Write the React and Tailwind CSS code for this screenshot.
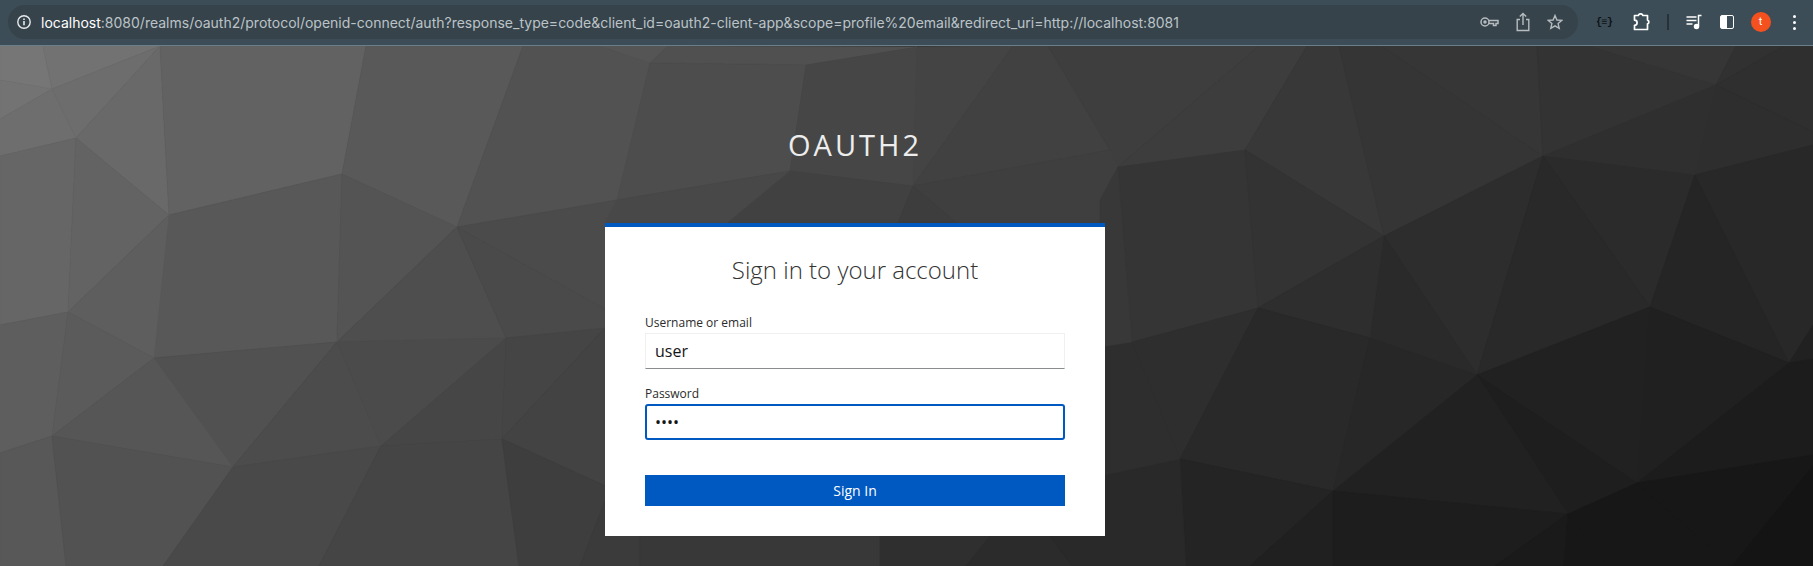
const POLYGONS = [
  ['0,46 43,46 52,89 0,80', '#7b7b7b'],
  ['43,46 160,46 52,89', '#747474'],
  ['0,80 52,89 0,119', '#757575'],
  ['0,119 52,89 76,138 0,156', '#6e6e6e'],
  ['52,89 160,46 76,138', '#6c6c6c'],
  ['160,46 169,215 76,138', '#686868'],
  ['0,156 76,138 68,312 0,325', '#666666'],
  ['76,138 169,215 68,312', '#616161'],
  ['160,46 366,46 342,174 169,215', '#626262'],
  ['366,46 523,46 457,227 342,174', '#5b5b5b'],
  ['523,46 600,46 650,63 617,200 457,227', '#525252'],
  ['169,215 342,174 337,342 154,358', '#585858'],
  ['169,215 154,358 68,312', '#5e5e5e'],
  ['342,174 457,227 337,342', '#565656'],
  ['457,227 506,338 337,342', '#505050'],
  ['457,227 640,328 506,338', '#4a4a4a'],
  ['457,227 617,200 640,200 640,328', '#4c4c4c'],
  ['0,325 68,312 52,436 0,453', '#606060'],
  ['68,312 154,358 52,436', '#5c5c5c'],
  ['154,358 337,342 233,467', '#505050'],
  ['52,436 154,358 233,467', '#555555'],
  ['337,342 381,446 233,467', '#4b4b4b'],
  ['337,342 506,338 381,446', '#4b4b4b'],
  ['506,338 502,439 381,446', '#454545'],
  ['506,338 605,328 502,439', '#434343'],
  ['605,328 640,328 640,490 610,488 502,439', '#434343'],
  ['0,453 52,436 66,566 0,566', '#585858'],
  ['52,436 233,467 163,566 66,566', '#505050'],
  ['233,467 381,446 319,566 163,566', '#474747'],
  ['381,446 502,439 519,566 319,566', '#444444'],
  ['502,439 610,488 580,566 519,566', '#3d3d3d'],
  ['610,488 640,490 640,566 580,566', '#383838'],
  ['600,46 668,46 650,63', '#585858'],
  ['668,46 917,47 806,65 650,63', '#535353'],
  ['650,63 806,65 790,171 617,200', '#4d4d4d'],
  ['806,65 917,47 913,186 790,171', '#474747'],
  ['917,47 1013,46 913,186', '#454545'],
  ['1013,46 1048,46 1110,150 913,186', '#424242'],
  ['1048,46 1259,46 1118,167 1110,150', '#3e3e3e'],
  ['790,171 913,186 898,223 727,223', '#3f3f3f'],
  ['617,200 790,171 727,223 605,223', '#454545'],
  ['913,186 1110,150 1118,167 1118,223 957,223', '#404040'],
  ['913,186 957,223 898,223', '#3a3a3a'],
  ['1118,167 1259,46 1307,46 1245,150', '#3f3f3f'],
  ['1307,46 1339,46 1384,236 1245,150', '#393939'],
  ['1339,46 1382,46 1543,156 1384,236', '#353535'],
  ['1382,46 1537,46 1543,156', '#383838'],
  ['1537,46 1589,46 1716,85 1543,156', '#333333'],
  ['1589,46 1736,46 1716,85', '#3a3a3a'],
  ['1736,46 1784,46 1716,85', '#323232'],
  ['1784,46 1813,46 1813,132 1716,85', '#2d2d2d'],
  ['1716,85 1813,132 1813,145 1695,175', '#2d2d2d'],
  ['1543,156 1716,85 1695,175', '#2f2f2f'],
  ['1118,167 1245,150 1258,308 1132,342', '#353535'],
  ['1245,150 1384,236 1258,308', '#333333'],
  ['1384,236 1543,156 1477,375', '#2d2d2d'],
  ['1384,236 1477,375 1370,338', '#2a2a2a'],
  ['1258,308 1384,236 1370,338', '#2e2e2e'],
  ['1543,156 1695,175 1650,307', '#2b2b2b'],
  ['1543,156 1650,307 1477,375', '#292929'],
  ['1695,175 1813,145 1813,325 1789,363', '#282828'],
  ['1695,175 1789,363 1650,307', '#252525'],
  ['1132,342 1258,308 1180,459', '#2e2e2e'],
  ['1258,308 1370,338 1333,491 1180,459', '#292929'],
  ['1370,338 1477,375 1333,491', '#272727'],
  ['1477,375 1650,307 1637,483', '#222222'],
  ['1650,307 1789,363 1637,483', '#202020'],
  ['1477,375 1637,483 1568,514', '#1f1f1f'],
  ['1477,375 1568,514 1333,491', '#212121'],
  ['1789,363 1813,325 1813,359', '#222222'],
  ['1789,363 1813,359 1813,455 1637,483', '#1c1c1c'],
  ['1333,491 1568,514 1495,566 1333,566', '#1b1b1b'],
  ['1180,459 1333,491 1250,566 1186,566', '#232323'],
  ['1333,491 1333,566 1250,566', '#1e1e1e'],
  ['1568,514 1495,566 1564,566', '#191919'],
  ['1568,514 1564,566 1607,566', '#141414'],
  ['1568,514 1637,483 1732,566 1607,566', '#161616'],
  ['1637,483 1813,455 1813,466 1732,566', '#161616'],
  ['1813,466 1813,566 1732,566', '#111111'],
  ['640,536 880,536 880,566 640,566', '#383838'],
  ['880,536 990,536 966,566 880,566', '#303030'],
  ['990,536 1050,536 1072,566 966,566', '#2a2a2a'],
  ['1050,536 1100,476 1180,459 1186,566 1072,566', '#282828'],
  ['1100,347 1132,342 1180,459 1100,476', '#2e2e2e'],
  ['1100,200 1118,167 1132,342 1100,347', '#393939'],
];

// soften the seams: each facet is pulled toward the average of its neighbours
const facets = POLYGONS.map(([points, fill]) => {
  const pts = points.split(' ').map((p) => p.split(',').map(Number));
  return {
    points,
    lum: parseInt(fill.slice(1, 3), 16),
    x: pts.reduce((s, p) => s + p[0], 0) / pts.length,
    y: pts.reduce((s, p) => s + p[1], 0) / pts.length,
  };
});

function softFill(f) {
  let sum = 0;
  let total = 0;
  facets.forEach((o) => {
    const d2 = (o.x - f.x) ** 2 + (o.y - f.y) ** 2;
    const w = Math.exp(-d2 / 16000);
    sum += w * o.lum;
    total += w;
  });
  const v = Math.round(f.lum * 0.45 + (sum / total) * 0.55);
  return `rgb(${v},${v},${v})`;
}

function PolyBackground() {
  return (
    <svg className="absolute left-0 top-[-46px] h-[566px] w-[1813px]" viewBox="0 0 1813 566">
      <rect width="1813" height="566" fill="#333333" />
      {facets.map((f) => {
        const fill = softFill(f);
        return <polygon key={f.points} points={f.points} fill={fill} stroke={fill} strokeWidth="0.6" />;
      })}
    </svg>
  );
}

function Toolbar() {
  return (
    <div className="flex h-[46px] items-center border-b border-[#6c7e8a] bg-[#3c4d57] pb-[1px]">
      <div className="ml-[8px] flex h-[34px] w-[1570px] items-center rounded-full bg-[#36434b]">
        <svg className="ml-[8px] h-[16px] w-[16px]" viewBox="0 0 16 16" fill="none" stroke="#e8eaed">
          <circle cx="8" cy="8" r="6.2" strokeWidth="1.4" />
          <path d="M8 7v4.2" strokeWidth="1.6" />
          <path d="M8 4.4v1.6" strokeWidth="1.6" />
        </svg>
        <div className="ml-[9px] whitespace-nowrap font-['Inter',sans-serif] text-[14px] text-[#bcc3c8]">
          <span className="text-white">localhost</span>
          :8080/realms/oauth2/protocol/openid-connect/auth?response_type=code&amp;client_id=oauth2-client-app&amp;scope=profile%20email&amp;redirect_uri=http://localhost:8081
        </div>
        <div className="ml-auto mr-[15px] flex items-center gap-[17px]">
          <svg className="h-[14px] w-[19px]" viewBox="0 0 19 14" fill="none" stroke="#b6bcc0" strokeWidth="1.5">
            <circle cx="5" cy="7" r="4" />
            <circle cx="5" cy="7" r="1" fill="#b6bcc0" />
            <path d="M9 5.5h9v3h-2v2h-2.5v-2H9" />
          </svg>
          <svg className="h-[20px] w-[14px]" viewBox="0 0 14 20" fill="none" stroke="#b6bcc0" strokeWidth="1.4">
            <path d="M4 7.5H1.2v11h11.6v-11H10" />
            <path d="M7 13V1.5M3.8 4.6 7 1.5l3.2 3.1" />
          </svg>
          <svg className="h-[16px] w-[16px]" viewBox="0 0 16 16" fill="none" stroke="#b6bcc0" strokeWidth="1.4">
            <path d="M8 1.5 9.9 6l4.8.4-3.6 3.2 1.1 4.8L8 11.9l-4.2 2.5 1.1-4.8-3.6-3.2L6.1 6z" />
          </svg>
        </div>
      </div>
      <div className="ml-[18px] font-['Liberation_Mono',monospace] text-[10px] font-bold tracking-[-0.5px] text-[#0d1114]">{'{≡}'}</div>
      <svg className="ml-[20px] h-[18px] w-[18px]" viewBox="0 0 18 18" fill="none" stroke="#ffffff" strokeWidth="1.7" strokeLinejoin="round">
        <path d="M1.5 2.5h3.8a2.4 2.4 0 0 1 4.6 0h4.6v4.6a2 2 0 0 1 0 3.8v5.6H1.5v-4.2a2.6 2.6 0 0 0 0-5.2z" />
      </svg>
      <div className="ml-[16px] h-[16px] w-[2px] bg-[#26323a]" />
      <svg className="ml-[17px] h-[16px] w-[16px]" viewBox="0 0 16 16" fill="none" stroke="#ffffff" strokeWidth="1.5">
        <path d="M0.5 3h10M0.5 6.5h10M0.5 10h6" />
        <path d="M12.5 12V1.5H15.5" />
        <circle cx="10.5" cy="12.5" r="2" fill="#ffffff" />
      </svg>
      <div className="ml-[18px] flex h-[14px] w-[14px] rounded-[2px] border-[1.5px] border-white">
        <div className="w-1/2 bg-white" />
      </div>
      <div className="ml-[17px] flex h-[20px] w-[20px] items-center justify-center rounded-full bg-[#f4511e] font-['Roboto',sans-serif] text-[11px] text-white">
        t
      </div>
      <div className="ml-[22px] flex flex-col gap-[3px]">
        <div className="h-[3px] w-[3px] rounded-full bg-white" />
        <div className="h-[3px] w-[3px] rounded-full bg-white" />
        <div className="h-[3px] w-[3px] rounded-full bg-white" />
      </div>
    </div>
  );
}

function Field({ label, type, value, focused }) {
  return (
    <div>
      <label className="block text-[12px] leading-[18px] text-[#2b2b2b]">{label}</label>
      <input
        readOnly
        type={type}
        value={value}
        className={
          focused
            ? "mt-[1px] block h-[36px] w-full rounded-[3px] border-2 border-[#0059c1] bg-white px-[8px] text-[16px] text-[#151515] outline-none"
            : "mt-[1px] block h-[36px] w-full border border-[#f0f0f0] border-b-[#8a8d90] bg-white px-[9px] text-[16px] text-[#151515] outline-none"
        }
      />
    </div>
  );
}

export default function App() {
  return (
    <div className="h-[566px] w-[1813px] overflow-hidden font-['Open_Sans',sans-serif]">
      <Toolbar />
      <main className="relative h-[520px] overflow-hidden">
        <PolyBackground />
        <div className="relative flex w-[1710px] flex-col items-center">
          <h1 className="mt-[79px] text-[29px] leading-[40px] tracking-[3px] text-[#ededed]">OAUTH2</h1>
          <div className="mt-[58px] h-[313px] w-[500px] border-t-4 border-[#0059c1] bg-white px-[40px]">
            <h2 className="mt-[27px] text-center text-[24px] font-light leading-[32px] text-[#333333]">
              Sign in to your account
            </h2>
            <div className="mt-[28px] flex flex-col gap-[16px]">
              <Field label="Username or email" type="text" value="user" />
              <Field label="Password" type="password" value="user" focused />
            </div>
            <button className="mt-[35px] h-[31px] w-full bg-[#0059c1] text-[14px] font-medium text-white">Sign In</button>
          </div>
        </div>
      </main>
    </div>
  );
}
